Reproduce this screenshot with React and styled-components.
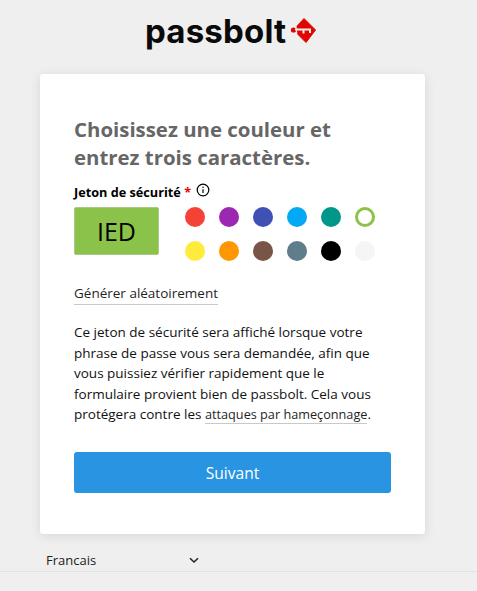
import React from 'react';
import styled, { createGlobalStyle } from 'styled-components';

const GlobalStyle = createGlobalStyle`
  html, body {
    margin: 0;
    padding: 0;
    height: 100%;
    background: #efefef;
    overflow: hidden;
  }
  * { box-sizing: border-box; }
`;

const colors = [
  '#f44336', '#9c27b0', '#3f51b5', '#03a9f4', '#009688', '#8bc34a',
  '#ffeb3b', '#ff9800', '#795548', '#607d8b', '#000000', '#f5f5f5',
];

const Page = styled.div`
  position: relative;
  width: 477px;
  height: 591px;
  padding-top: 14px;
  font-family: "Open Sans", sans-serif;
  color: #000;
`;

const Header = styled.header`
  height: 60px;
  display: flex;
  justify-content: flex-start;
  padding-left: 145px;
`;

const Logo = styled.div`
  display: flex;
  align-items: flex-start;
  gap: 3px;
  height: 40px;
`;

const LogoText = styled.span`
  font-family: Inter, sans-serif;
  font-weight: 700;
  font-size: 33px;
  line-height: 35px;
  letter-spacing: 0.2px;
  color: #0a0a0a;
`;

const LogoMark = styled.svg`
  width: 28px;
  height: 27px;
  margin-top: 3px;
`;

const Card = styled.main`
  width: 385px;
  height: 460px;
  margin-left: 40px;
  padding: 42px 34px 0;
  background: #fff;
  border-radius: 3px;
  box-shadow: 0 2px 12px rgba(0, 0, 0, 0.1);
`;

const Title = styled.h1`
  margin: 0;
  font-size: 20.4px;
  line-height: 27.5px;
  font-weight: 700;
  color: #666;
`;

const FieldLabel = styled.div`
  display: flex;
  align-items: flex-start;
  gap: 5px;
  margin-top: 10px;
  height: 26px;
  font-size: 12.7px;
  line-height: 22px;
  font-weight: 700;
`;

const Required = styled.span`
  color: #e10600;
`;

const InfoIcon = styled.svg`
  width: 14px;
  height: 14px;
  margin-top: 2px;
`;

const TokenRow = styled.div`
  display: flex;
  align-items: flex-start;
  gap: 26px;
`;

const TokenInput = styled.div`
  width: 85px;
  height: 48px;
  display: flex;
  align-items: center;
  justify-content: center;
  background: ${(p) => p.$color};
  border: 1px solid #a9c98a;
  border-radius: 2px;
  font-size: 25px;
  color: #000;
`;

const Swatches = styled.div`
  display: grid;
  grid-template-columns: repeat(6, 20px);
  column-gap: 14px;
  row-gap: 14px;
`;

const Swatch = styled.span`
  width: 20px;
  height: 20px;
  border-radius: 50%;
  background: ${(p) => (p.$active ? 'transparent' : p.$color)};
  border: ${(p) => (p.$active ? `3px solid ${p.$color}` : 'none')};
`;

const RandomLink = styled.a`
  display: inline-block;
  margin-top: 23px;
  font-size: 13.5px;
  line-height: 19px;
  padding-bottom: 1px;
  color: #1f1f1f;
  border-bottom: 1px solid #c9c9c9;
`;

const Help = styled.p`
  margin: 17px 0 0;
  width: 320px;
  font-size: 13.5px;
  line-height: 20.5px;
  color: #111;
`;

const HelpLink = styled.a`
  font-size: 12.7px;
  color: #1f1f1f;
  box-shadow: 0 1px 0 #c9c9c9;
`;

const NextButton = styled.button`
  display: block;
  width: 317px;
  height: 41px;
  margin-top: 27px;
  padding: 2px 0 0;
  border: none;
  border-radius: 3px;
  background: #2894e2;
  color: #fff;
  font-family: inherit;
  font-size: 15.6px;
`;

const LanguageBar = styled.div`
  display: flex;
  align-items: center;
  justify-content: space-between;
  width: 153px;
  margin: 17px 0 0 46px;
  height: 18px;
  font-size: 13px;
  color: #222;
`;

const Footer = styled.footer`
  position: absolute;
  left: 0;
  right: 0;
  bottom: 0;
  height: 20px;
  border-top: 1px solid #e2e2e2;
`;

const App = () => {
  return (
    <>
      <GlobalStyle />
      <Page>
        <Header>
          <Logo>
            <LogoText>passbolt</LogoText>
            <LogoMark viewBox="0 0 28 27">
              <path d="M15 1.5 L26.5 13 L17 25.5 L9 17.5 L8 9 Z" fill="#e10600" stroke="#e10600" strokeWidth="1" strokeLinejoin="round" />
              <circle cx="4.5" cy="13" r="2.6" fill="#e10600" />
              <path d="M6 12.5 H21 V16 M14.5 12.5 V16.5" fill="none" stroke="#efefef" strokeWidth="2" />
            </LogoMark>
          </Logo>
        </Header>
        <Card>
          <Title>Choisissez une couleur et<br />entrez trois caractères.</Title>
          <FieldLabel>
            <span>Jeton de sécurité <Required>*</Required></span>
            <InfoIcon viewBox="0 0 14 14" fill="none" stroke="#000" strokeWidth="1.2">
              <circle cx="7" cy="7" r="5.8" />
              <path d="M7 6.3 V10 M7 3.8 V5" />
            </InfoIcon>
          </FieldLabel>
          <TokenRow>
            <TokenInput $color="#8bc34a">IED</TokenInput>
            <Swatches>
              {colors.map((c) => (
                <Swatch key={c} $color={c} $active={c === '#8bc34a'} />
              ))}
            </Swatches>
          </TokenRow>
          <RandomLink>Générer aléatoirement</RandomLink>
          <Help>
            Ce jeton de sécurité sera affiché lorsque votre phrase de passe vous sera demandée, afin que vous puissiez vérifier rapidement que le formulaire provient bien de passbolt. Cela vous protégera contre les <HelpLink>attaques par hameçonnage</HelpLink>.
          </Help>
          <NextButton>Suivant</NextButton>
        </Card>
        <LanguageBar>
          <span>Francais</span>
          <svg width="10" height="7" viewBox="0 0 10 7" fill="none" stroke="#222" strokeWidth="1.5">
            <path d="M1 1.2 L5 5 L9 1.2" />
          </svg>
        </LanguageBar>
        <Footer />
      </Page>
    </>
  );
};

export default App;
